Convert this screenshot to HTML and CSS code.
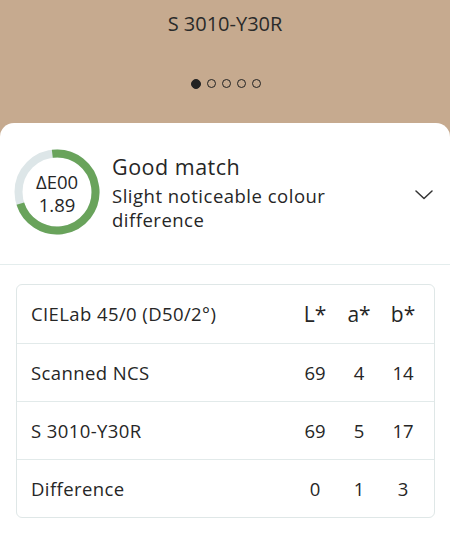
FILE: index.html
```html
<!DOCTYPE html>
<html lang="en">
<head>
  <meta charset="UTF-8">
  <title>Colour match</title>
  <meta name="viewport" content="width=device-width, initial-scale=1.0">
  <link rel="stylesheet" href="styles.css">
</head>
<body>
  <!-- Farbfeld oben -->
  <div class="swatch">
    <h1 class="swatch-name">S 3010-Y30R</h1>
    <div class="dots">
      <span class="dot active"></span>
      <span class="dot"></span>
      <span class="dot"></span>
      <span class="dot"></span>
      <span class="dot"></span>
    </div>
  </div>

  <div class="sheet">
    <div class="match">
      <div class="ring">
        <svg width="86" height="86" viewBox="0 0 86 86">
          <circle cx="43" cy="43" r="38.5" fill="none" stroke="#dde6e8" stroke-width="8"/>
          <circle cx="43" cy="43" r="38.5" fill="none" stroke="#69a35b" stroke-width="8"
                  stroke-dasharray="174 250" transform="rotate(-97 43 43)"/>
        </svg>
        <div class="ring-text">
          <span>ΔE00</span>
          <span>1.89</span>
        </div>
      </div>
      <div class="match-text">
        <h2>Good match</h2>
        <p>Slight noticeable colour difference</p>
      </div>
      <svg class="chevron" width="18" height="10" viewBox="0 0 18 10">
        <path d="M1 1 L9 8.5 L17 1" fill="none" stroke="#333" stroke-width="1.5" stroke-linecap="round" stroke-linejoin="round"/>
      </svg>
    </div>

    <div class="lab-table">
      <div class="row head">
        <div class="label">CIELab 45/0 (D50/2°)</div>
        <div class="val">L*</div>
        <div class="val">a*</div>
        <div class="val">b*</div>
      </div>
      <div class="row">
        <div class="label">Scanned NCS</div>
        <div class="val">69</div>
        <div class="val">4</div>
        <div class="val">14</div>
      </div>
      <div class="row">
        <div class="label">S 3010-Y30R</div>
        <div class="val">69</div>
        <div class="val">5</div>
        <div class="val">17</div>
      </div>
      <div class="row">
        <div class="label">Difference</div>
        <div class="val">0</div>
        <div class="val">1</div>
        <div class="val">3</div>
      </div>
    </div>
  </div>
</body>
</html>
```

FILE: styles.css
```css
body {
  font-family: "Open Sans", "Noto Sans", sans-serif;
  margin: 0;
  padding: 0;
  background-color: #c6aa8f;
  color: #262626;
}

.swatch {
  height: 123px;
  text-align: center;
  overflow: hidden;
}

.swatch-name {
  font-size: 20px;
  font-weight: 400;
  margin: 11.5px 0 0;
  line-height: 24px;
  color: #2a2a2a;
}

.dots {
  display: flex;
  justify-content: center;
  align-items: center;
  gap: 6px;
  margin-top: 43px;
  padding-left: 1px;
}

.dot {
  width: 9px;
  height: 9px;
  border: 1px solid #222;
  border-radius: 50%;
  box-sizing: border-box;
}

.dot.active {
  width: 10px;
  height: 10px;
  background-color: #222;
}

.sheet {
  background-color: #fff;
  border-radius: 14px 14px 0 0;
  height: 417px;
}

.match {
  display: flex;
  align-items: flex-start;
  padding: 26px 17px 0 14px;
  height: 142px;
  box-sizing: border-box;
  border-bottom: 1px solid #e4eded;
}

.ring {
  position: relative;
  width: 86px;
  height: 86px;
  flex-shrink: 0;
}

.ring svg {
  display: block;
}

.ring-text {
  position: absolute;
  inset: 0;
  padding-top: 2px;
  display: flex;
  flex-direction: column;
  align-items: center;
  justify-content: center;
  font-size: 18.5px;
  line-height: 23px;
}

.match-text {
  flex: 1;
  margin-left: 12px;
  margin-top: 4px;
  letter-spacing: 0.5px;
}

.match-text h2 {
  font-size: 21.5px;
  font-weight: 500;
  margin: 0;
  line-height: 28px;
}

.match-text p {
  font-size: 18.5px;
  margin: 3px 0 0;
  line-height: 24px;
  max-width: 250px;
}

.chevron {
  margin-top: 40.5px;
}

.lab-table {
  margin: 19px 15px 0 16px;
  border: 1px solid #dfe7e7;
  border-radius: 6px;
}

.row {
  display: flex;
  align-items: center;
  height: 57px;
  padding: 0 9px 0 14px;
  border-top: 1px solid #e2eaea;
  font-size: 18.5px;
  line-height: 24px;
}

.row:first-child {
  border-top: none;
}

.row.head {
  height: 58px;
  font-weight: 500;
}

.label {
  flex: 1;
  letter-spacing: 0.4px;
}

.val {
  width: 44px;
  text-align: center;
}

.head .val {
  font-size: 21px;
  font-weight: 400;
}
```
